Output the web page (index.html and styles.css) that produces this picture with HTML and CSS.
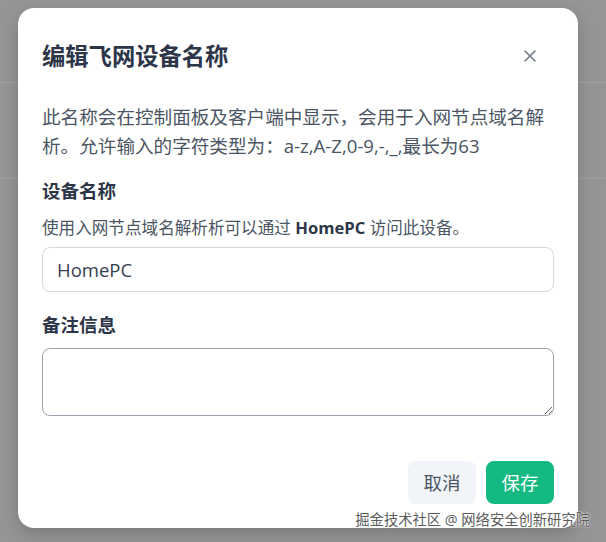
FILE: index.html
```html
<!DOCTYPE html>
<html lang="zh-CN">
<head>
    <meta charset="UTF-8">
    <meta name="viewport" content="width=device-width, initial-scale=1.0">
    <title>编辑飞网设备名称</title>
    <link rel="stylesheet" href="styles.css">
</head>
<body>
    <!-- page behind the overlay -->
    <div class="backdrop">
        <div class="bar-top"></div>
        <div class="bar-mid"></div>
    </div>

    <div class="modal">
        <div class="modal-header">
            <h2 class="modal-title">编辑飞网设备名称</h2>
            <button type="button" class="close-btn" aria-label="关闭">
                <svg width="14" height="14" viewBox="0 0 14 14">
                    <path d="M2 2 L12 12 M12 2 L2 12" stroke="#6b7280" stroke-width="1.5" stroke-linecap="round" fill="none"/>
                </svg>
            </button>
        </div>

        <p class="modal-desc">此名称会在控制面板及客户端中显示，会用于入网节点域名解析。允许输入的字符类型为：a-z,A-Z,0-9,-,_,最长为63</p>

        <label class="field-label" for="device_name">设备名称</label>
        <p class="field-hint">使用入网节点域名解析析可以通过 <b>HomePC</b> 访问此设备。</p>
        <input type="text" id="device_name" class="text-input" value="HomePC">

        <label class="field-label note-label" for="device_note">备注信息</label>
        <textarea id="device_note" class="text-area"></textarea>

        <div class="modal-footer">
            <button type="button" class="btn btn-cancel">取消</button>
            <button type="button" class="btn btn-save">保存</button>
        </div>
    </div>

    <div class="watermark">掘金技术社区 @ 网络安全创新研究院</div>
</body>
</html>
```

FILE: styles.css
```css
body {
    margin: 0;
    width: 606px;
    height: 542px;
    overflow: hidden;
    background: #959595;
    font-family: "Open Sans", "Noto Sans CJK SC", sans-serif;
    position: relative;
}
.backdrop {
    position: absolute;
    inset: 0;
}
.bar-top {
    height: 82px;
    border-bottom: 1px solid #a4a4a4;
}
.bar-mid {
    height: 95px;
    border-bottom: 1px solid #a0a0a0;
}
.modal {
    position: relative;
    margin: 8px 0 0 18px;
    width: 560px;
    height: 520px;
    box-sizing: border-box;
    padding: 32px 24px 24px;
    background: #fff;
    border-radius: 16px;
    box-shadow: 0 6px 16px rgba(0, 0, 0, 0.18);
    display: flex;
    flex-direction: column;
}
.modal-header {
    display: flex;
    align-items: center;
    justify-content: space-between;
    height: 32px;
}
.modal-title {
    margin: 0;
    font-size: 23.3px;
    line-height: 32px;
    font-weight: 700;
    color: #2d3648;
}
.close-btn {
    border: none;
    background: none;
    padding: 0;
    margin-right: 17px;
    width: 14px;
    height: 14px;
    display: flex;
}
.modal-desc {
    margin: 30px 0 0;
    font-size: 18.6px;
    line-height: 29px;
    color: #4b5563;
}
.field-label {
    display: block;
    margin-top: 17px;
    font-size: 18.5px;
    line-height: 28px;
    font-weight: 700;
    color: #2d3648;
}
.note-label {
    margin-top: 19px;
}
.field-hint {
    margin: 11px 0 0;
    font-size: 16.6px;
    line-height: 24px;
    color: #4b5563;
}
.field-hint b {
    color: #2d3648;
}
.text-input {
    margin-top: 7px;
    height: 45px;
    box-sizing: border-box;
    padding: 0 14px;
    border: 1px solid #d5d8de;
    border-radius: 8px;
    font-family: inherit;
    font-size: 18.5px;
    color: #374151;
    outline: none;
}
.text-area {
    margin-top: 9px;
    height: 68px;
    box-sizing: border-box;
    border: 1px solid #9ca3af;
    border-radius: 8px;
    font-family: inherit;
    resize: vertical;
    outline: none;
}
.modal-footer {
    margin-top: auto;
    display: flex;
    justify-content: flex-end;
    gap: 10px;
}
.btn {
    height: 43px;
    padding: 0 15.5px;
    border: none;
    border-radius: 8px;
    font-family: inherit;
    font-size: 18.5px;
    line-height: 43px;
}
.btn-cancel {
    background: #f1f5f9;
    color: #4b5563;
}
.btn-save {
    background: #13b981;
    color: #fff;
}
.watermark {
    position: absolute;
    right: 16px;
    bottom: 12px;
    font-size: 14.3px;
    line-height: 20px;
    color: #5c5c5c;
    text-shadow: 0 0 2px #fff, 0 0 1px #fff;
}
```
